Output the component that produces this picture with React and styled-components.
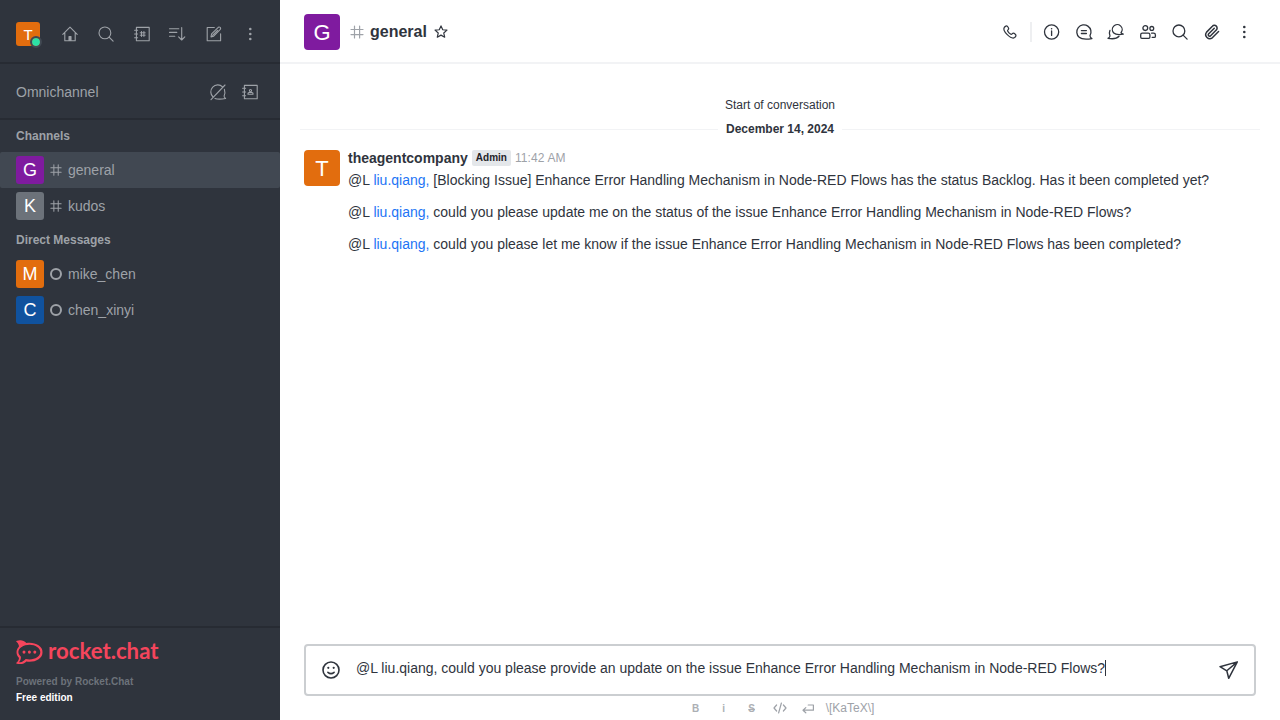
import React from "react";
import styled, { createGlobalStyle, css } from "styled-components";

const Global = createGlobalStyle`
  *, *::before, *::after { box-sizing: border-box; }
  html, body, #root { height: 100%; margin: 0; }
  body {
    font-family: "Liberation Sans", Arial, sans-serif;
    font-size: 14px;
    line-height: 20px;
    color: #2f343d;
    background: #fff;
    overflow: hidden;
  }
`;

const Shell = styled.div`
  display: flex;
  width: 100%;
  height: 100%;
`;

const Sidebar = styled.aside`
  display: flex;
  flex-direction: column;
  flex: 0 0 280px;
  background: #2f343d;
  color: #9ea2a8;
`;

const SidebarTop = styled.div`
  display: flex;
  align-items: center;
  height: 64px;
  padding: 6px 16px 0;
  border-bottom: 2px solid #272b33;
`;

const SidebarActions = styled.div`
  display: flex;
  gap: ${(p) => p.$gap || 8}px;
  margin-left: auto;
`;

const IconButton = styled.button`
  display: flex;
  align-items: center;
  justify-content: center;
  width: 28px;
  height: 28px;
  padding: 0;
  border: 0;
  background: none;
  color: inherit;
`;

const Avatar = styled.span`
  position: relative;
  display: flex;
  align-items: center;
  justify-content: center;
  flex: none;
  width: ${(p) => p.$size}px;
  height: ${(p) => p.$size}px;
  padding-top: ${(p) => (p.$size > 30 ? 2 : 0)}px;
  border-radius: ${(p) => (p.$size > 30 ? 4 : 3)}px;
  background: ${(p) => p.$color};
  color: #fff;
  font-size: ${(p) => p.$font}px;
  line-height: 1;
`;

const OnlineBadge = styled.i`
  position: absolute;
  right: -2px;
  bottom: -2px;
  width: 12px;
  height: 12px;
  border: 2px solid #414852;
  border-radius: 50%;
  background: #2de0a5;
  background-clip: padding-box;
`;

const Omnichannel = styled.div`
  display: flex;
  align-items: center;
  height: 56px;
  padding: 2px 16px 0;
  border-bottom: 2px solid #272b33;
`;

const RoomList = styled.nav`
  flex: 1;
`;

const SectionTitle = styled.h3`
  height: 32px;
  margin: 0;
  padding: 0 16px;
  font-size: 12px;
  line-height: 32px;
  font-weight: 700;
`;

const Room = styled.div`
  display: flex;
  align-items: center;
  height: 36px;
  padding: 0 16px;
  border-radius: 2px;
  ${(p) => p.$active && css`background: #414852;`}
`;

const RoomIcon = styled.span`
  display: flex;
  justify-content: center;
  width: 24px;
`;

const SidebarFooter = styled.footer`
  height: 94px;
  padding: 6px 16px 0;
  border-top: 2px solid #272b33;
  font-size: 10px;
  font-weight: 700;
  line-height: 16px;
`;

const Brand = styled.div`
  height: 40px;
  color: #f5455c;
`;

const Powered = styled.div`
  color: #6c727a;
`;

const Edition = styled.div`
  color: #fff;
`;

const Main = styled.main`
  display: flex;
  flex-direction: column;
  flex: 1;
  min-width: 0;
`;

const RoomHeader = styled.header`
  display: flex;
  align-items: center;
  height: 64px;
  padding: 2px 22px 0 24px;
  border-bottom: 2px solid #f2f3f5;
`;

const HeaderHash = styled.span`
  display: flex;
  justify-content: center;
  width: 20px;
  margin: 0 3px 0 7px;
  color: #9ea2a8;
`;

const RoomTitle = styled.h1`
  margin: 0 4px 0 0;
  font-size: 16px;
  line-height: 24px;
  font-weight: 700;
`;

const HeaderActions = styled.div`
  display: flex;
  align-items: center;
  gap: 4px;
  margin-left: auto;
`;

const HeaderDivider = styled.span`
  width: 2px;
  height: 20px;
  margin: 0 2px 0 2px;
  background: #eeeff1;
`;

const Messages = styled.section`
  flex: 1;
  padding-top: 33px;
`;

const StartLabel = styled.div`
  font-size: 12px;
  line-height: 16px;
  text-align: center;
`;

const DateDivider = styled.div`
  display: flex;
  align-items: center;
  gap: 8px;
  height: 16px;
  margin: 8px 20px 0;
  font-size: 12px;
  font-weight: 700;
  &::before, &::after {
    content: "";
    flex: 1;
    height: 1px;
    background: #f2f3f5;
  }
`;

const DateLabel = styled.span``;

const Message = styled.article`
  display: flex;
  gap: 8px;
  padding: 13px 24px 0;
`;

const MessageHead = styled.div`
  display: flex;
  align-items: center;
  height: 16px;
`;

const Author = styled.span`
  font-weight: 700;
`;

const RoleTag = styled.span`
  margin: 0 4px;
  padding: 0 4px;
  border-radius: 2px;
  background: #e4e7ea;
  color: #1f2329;
  font-size: 10px;
  line-height: 16px;
  font-weight: 700;
`;

const Time = styled.time`
  color: #9ea2a8;
  font-size: 12px;
  letter-spacing: 0.12px;
`;

const MessageBody = styled.p`
  margin: 0 0 12px;
  white-space: nowrap;
  &:first-of-type { margin-top: 4px; }
`;

const Mention = styled.a`
  color: #1d74f5;
`;

const ComposerArea = styled.div`
  padding: 0 24px;
`;

const Composer = styled.div`
  display: flex;
  align-items: center;
  height: 52px;
  padding: 0 11px;
  border: 2px solid #cbced1;
  border-radius: 4px;
`;

const Draft = styled.div`
  flex: 1;
  display: flex;
  align-items: center;
  margin: -4px 0 0 11px;
  white-space: nowrap;
`;

const Caret = styled.span`
  width: 1px;
  height: 16px;
  background: #2f343d;
`;

const FormatBar = styled.div`
  display: flex;
  align-items: center;
  justify-content: center;
  height: 24px;
  padding-right: 2px;
  color: #9ea2a8;
  font-size: 12px;
`;

const FormatItem = styled.span`
  display: flex;
  align-items: center;
  justify-content: center;
  width: 28px;
  height: 24px;
`;

const Katex = styled.span`
  margin-left: 4px;
  margin-right: 2px;
`;

const Drawing = styled.svg`
  display: block;
  flex: none;
  fill: none;
  stroke: currentColor;
  stroke-linecap: round;
  stroke-linejoin: round;
  overflow: visible;
`;

const dots = [5, 10, 15];

const glyphs = {
  home: <path d="M2.8 10.4 10 3.2l7.2 7.2M4.8 9v7.8h10.4V9M9 16.5v-4h2v4M9.6 13v3.6h.8V13" />,
  search: <><circle cx="8.9" cy="8.9" r="5.9" /><path d="m13.1 13.1 4 4" /></>,
  directory: <><path d="M4.4 3.4h12.8v13.4H4.4zM2.6 6.2h3M2.6 10h3M2.6 13.8h3" /><path strokeWidth="1" d="M9.5 7.5v5M11.9 7.5v5M8.2 8.8h5M8.2 11.2h5" /></>,
  sort: <path d="M1.5 4.7h9.3M1.5 8.4h7.3M1.5 12.2h5.3M13.7 3.6v12.2M10.6 12.9l3.1 3.1 3.1-3.1" />,
  edit: <><path d="M10.3 3.5H3.2v13.3h13.4V9.8" /><path d="m7 12.9.6-3 6.7-6.6q1-.7 1.9.1.9 1 .1 2L9.7 12.2zM8.6 11.3l4.9-5" /></>,
  kebab: <g fill="currentColor" stroke="none">{dots.map((y) => <circle key={y} cx="10.3" cy={y} r="1.3" />)}</g>,
  omniOff: <><path d="M14.6 4.8A7 7 0 0 0 5 15M7 16.4c3 1.2 6.5.8 10.6.1-1.3-1-1.7-1.6-1.5-2.6 1-2 1-4.5.3-6.6M3 17.6 17 3" /></>,
  contacts: <><path d="M4.4 3.4h12.8v13.4H4.4zM2.6 6.2h3M2.6 10h3M2.6 13.8h3" /><circle cx="10.5" cy="8.6" r="1.1" /><path d="M8 12.3v-.8q0-1 1-1h3q1 0 1 1v.8z" /></>,
  star: <path transform="translate(1.6 1.2) scale(.84)" d="m10 3.2 2.1 4.6 5 .5-3.8 3.4 1.1 5-4.4-2.5-4.4 2.5 1.1-5-3.8-3.4 5-.5z" />,
  phone: <path transform="translate(.5 .4) scale(.95)" d="M4 5.2c1-1.3 2.4-2 3.3-1 .9 1 1.7 2.4 1 3.2-.6.7-1.2.9-.8 1.7.7 1.4 1.9 2.6 3.4 3.4.8.4 1-.2 1.7-.8.8-.7 2.2.1 3.2 1 1 .9.3 2.3-1 3.3-1.6 1-5.2-.7-7.7-3.1C4.7 10.5 2.9 6.9 4 5.2z" />,
  info: <><circle cx="9.6" cy="10" r="7.1" /><path d="M9.6 9v4.4" /><circle cx="9.6" cy="6.8" r=".8" fill="currentColor" stroke="none" /></>,
  thread: <><path d="M16 13.6A7.1 7.1 0 1 0 5.2 15.3c2.3 2 6.8 2.2 12.7 1.3-1.4-.9-2-1.7-1.9-3z" /><path d="M7.4 8.6h5M7.4 11.5h5" /></>,
  discussion: <><path d="M15 10.7A4.9 4.9 0 1 0 7.8 11c1.7 1.7 4.9 1.9 9.5 1.2-1.2-.4-1.8-.8-2.3-1.5z" /><path d="M3.9 8.4c-.8 1.9-.7 4.1.1 5.6-.1 1-.8 1.7-2 2.3 4.3.8 8.6.6 11-2" /></>,
  team: <><circle cx="7.3" cy="6.1" r="2.4" /><circle cx="13.8" cy="6.4" r="1.9" /><path d="M2.7 12.8q0-1.6 1.6-1.6h6q1.6 0 1.6 1.6v2.2q0 1.4-1.2 1.4H3.9q-1.2 0-1.2-1.4zM13.6 11.2h2q1.8 0 1.8 1.8v1.2q0 1.2-1.2 1.2h-2" /></>,
  clip: <path transform="translate(2 2.1) scale(.68)" strokeWidth="2.2" d="m21.4 11-9.2 9.2a6 6 0 0 1-8.4-8.4l8.5-8.6A4 4 0 1 1 18 8.8l-8.6 8.6a2 2 0 0 1-2.8-2.8l8.5-8.5" />,
  emoji: <><circle cx="10" cy="10" r="8" /><circle cx="7.3" cy="7.8" r="1.1" fill="currentColor" stroke="none" /><circle cx="12.7" cy="7.8" r="1.1" fill="currentColor" stroke="none" /><path d="M6.9 12.3q3.1 2.6 6.2 0" /></>,
  send: <path d="M1 6.7 18.3 1.9 9.7 18.3 7.8 10.8zM7.8 10.8l10.5-8.9" />,
};

const Icon = ({ name, size = 20, weight = 1.1 }) => (
  <Drawing width={size} height={size} viewBox="0 0 20 20" strokeWidth={weight}>
    {glyphs[name]}
  </Drawing>
);

const Hash = ({ size }) => (
  <Drawing width={size} height={size} viewBox="0 0 14 14" strokeWidth="1.2">
    <path d="M4.5 1v12M9.6 1v12M1 4.5h12M1 9.6h12" />
  </Drawing>
);

const Status = () => (
  <Drawing width="12" height="12" viewBox="0 0 12 12" strokeWidth="2">
    <circle cx="6" cy="6" r="5" />
  </Drawing>
);

const Wordmark = styled.svg`
  display: block;
  overflow: visible;
`;

const BrandText = styled.text`
  font-family: Lato, sans-serif;
  font-size: 22px;
  font-weight: 700;
`;

const Logo = () => (
  <Wordmark width="148" height="36" viewBox="0 -6 148 36" fill="currentColor">
    <svg width="26.7" height="24" viewBox="16 48 480 408" preserveAspectRatio="none">
      <path
        fillRule="evenodd"
        d="M496.293 255.338c0-24.103-7.21-47.215-21.437-68.699-12.771-19.288-30.666-36.362-53.184-50.745-43.474-27.771-100.612-43.065-160.885-43.065-20.131 0-39.974 1.702-59.222 5.072-11.942-11.176-25.919-21.233-40.712-29.187-79.026-38.298-144.561-.9-144.561-.9s60.931 50.053 51.023 93.93c-27.259 27.041-42.033 59.646-42.033 93.594v.648c0 33.949 14.774 66.554 42.033 93.595 9.907 43.874-51.023 93.93-51.023 93.93s65.535 37.397 144.561-.901c14.792-7.953 28.77-18.011 40.712-29.187 19.249 3.372 39.092 5.073 59.222 5.073 60.272 0 117.411-15.295 160.885-43.065 22.518-14.383 40.412-31.457 53.184-50.746 14.227-21.484 21.437-44.597 21.437-68.699zM260.786 128c105 0 192 55 192 126.08s-87 126.083-192 126.083c-24.856 0-48.664-2.866-70.655-8.105-22.349 26.887-71.511 64.267-119.27 52.186 15.535-16.689 38.55-44.885 33.623-91.344-28.627-22.274-45.811-50.779-45.811-78.82 0-71.29 90.503-126.08 202.113-126.08z"
      />
      <circle cx="160" cy="254" r="27" />
      <circle cx="257" cy="254" r="27" />
      <circle cx="354" cy="254" r="27" />
    </svg>
    <BrandText x="32" y="19" textLength="110.5" lengthAdjust="spacingAndGlyphs">rocket.chat</BrandText>
  </Wordmark>
);

const Strong = styled.b`
  font-size: 10px;
  line-height: 12px;
  padding-top: 1px;
  opacity: 0.85;
`;

const Struck = styled(Strong)`
  text-decoration: line-through;
`;

const RoomRow = ({ letter, color, name, active, direct }) => (
  <Room $active={active}>
    <Avatar $size={28} $font={18} $color={color}>{letter}</Avatar>
    <RoomIcon>{direct ? <Status /> : <Hash size={12} />}</RoomIcon>
    {name}
  </Room>
);

const replies = [
  "[Blocking Issue] Enhance Error Handling Mechanism in Node-RED Flows has the status Backlog. Has it been completed yet?",
  "could you please update me on the status of the issue Enhance Error Handling Mechanism in Node-RED Flows?",
  "could you please let me know if the issue Enhance Error Handling Mechanism in Node-RED Flows has been completed?",
];

export default function App() {
  return (
    <Shell>
      <Global />
      <Sidebar>
        <SidebarTop>
          <Avatar $size={24} $font={15} $color="#e26d0e">T<OnlineBadge /></Avatar>
          <SidebarActions>
            {["home", "search", "directory", "sort", "edit", "kebab"].map((name) => (
              <IconButton key={name} aria-label={name}><Icon name={name} /></IconButton>
            ))}
          </SidebarActions>
        </SidebarTop>
        <Omnichannel>
          Omnichannel
          <SidebarActions $gap={4}>
            <IconButton aria-label="availability"><Icon name="omniOff" /></IconButton>
            <IconButton aria-label="contacts"><Icon name="contacts" /></IconButton>
          </SidebarActions>
        </Omnichannel>
        <RoomList>
          <SectionTitle>Channels</SectionTitle>
          <RoomRow letter="G" color="#7f1b9f" name="general" active />
          <RoomRow letter="K" color="#6c727a" name="kudos" />
          <SectionTitle>Direct Messages</SectionTitle>
          <RoomRow letter="M" color="#e26d0e" name="mike_chen" direct />
          <RoomRow letter="C" color="#10529e" name="chen_xinyi" direct />
        </RoomList>
        <SidebarFooter>
          <Brand><Logo /></Brand>
          <Powered>Powered by Rocket.Chat</Powered>
          <Edition>Free edition</Edition>
        </SidebarFooter>
      </Sidebar>

      <Main>
        <RoomHeader>
          <Avatar $size={36} $font={22} $color="#7f1b9f">G</Avatar>
          <HeaderHash><Hash size={14} /></HeaderHash>
          <RoomTitle>general</RoomTitle>
          <Icon name="star" weight={1.4} />
          <HeaderActions>
            <IconButton aria-label="call"><Icon name="phone" weight={1.3} /></IconButton>
            <HeaderDivider />
            {["info", "thread", "discussion", "team", "search", "clip", "kebab"].map((name) => (
              <IconButton key={name} aria-label={name}><Icon name={name} weight={1.3} /></IconButton>
            ))}
          </HeaderActions>
        </RoomHeader>

        <Messages>
          <StartLabel>Start of conversation</StartLabel>
          <DateDivider><DateLabel>December 14, 2024</DateLabel></DateDivider>
          <Message>
            <Avatar $size={36} $font={22} $color="#e26d0e">T</Avatar>
            <div>
              <MessageHead>
                <Author>theagentcompany</Author>
                <RoleTag>Admin</RoleTag>
                <Time>11:42 AM</Time>
              </MessageHead>
              {replies.map((text) => (
                <MessageBody key={text}>@L <Mention>liu.qiang,</Mention> {text}</MessageBody>
              ))}
            </div>
          </Message>
        </Messages>

        <ComposerArea>
          <Composer>
            <IconButton aria-label="emoji"><Icon name="emoji" weight={1.6} /></IconButton>
            <Draft>
              @L liu.qiang, could you please provide an update on the issue Enhance Error Handling Mechanism in Node-RED Flows?
              <Caret />
            </Draft>
            <IconButton aria-label="send"><Icon name="send" weight={1.5} /></IconButton>
          </Composer>
          <FormatBar>
            <FormatItem><Strong>B</Strong></FormatItem>
            <FormatItem><Strong>i</Strong></FormatItem>
            <FormatItem><Struck>S</Struck></FormatItem>
            <FormatItem>
              <Drawing width="14" height="12" viewBox="0 0 14 12" strokeWidth="1.2">
                <path d="M3.6 3 1 6l2.6 3M10.4 3 13 6l-2.6 3M8.4 1 5.6 11" />
              </Drawing>
            </FormatItem>
            <FormatItem>
              <Drawing width="12" height="12" viewBox="0 0 12 12" strokeWidth="1.2">
                <path d="M6.2 3h5.2v5.2H1M3.8 5.6 1 8.2l2.8 2.6" />
              </Drawing>
            </FormatItem>
            <Katex>\[KaTeX\]</Katex>
          </FormatBar>
        </ComposerArea>
      </Main>
    </Shell>
  );
}
